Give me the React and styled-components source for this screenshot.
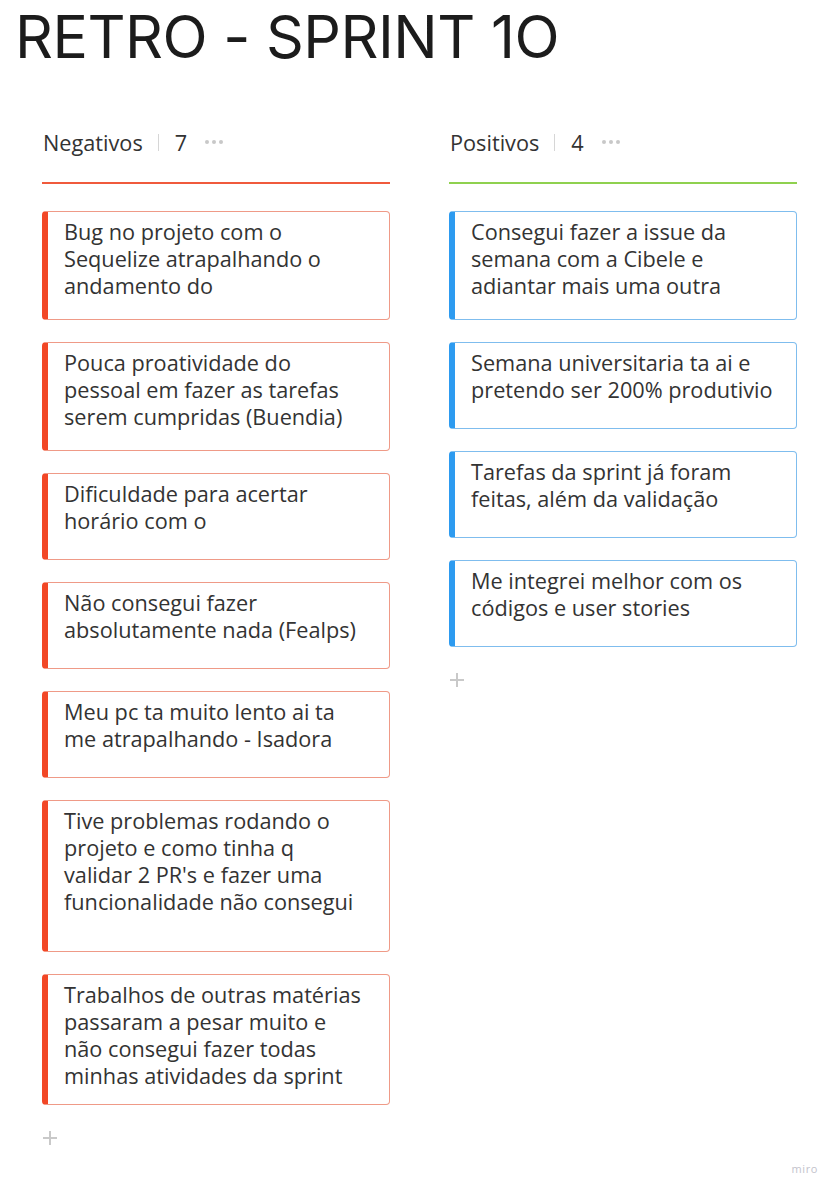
import React from "react";
import styled, { createGlobalStyle } from "styled-components";

const Global = createGlobalStyle`
  html, body { margin: 0; padding: 0; background: #ffffff; }
  body { width: 837px; height: 1193px; overflow: hidden; }
`;

const Page = styled.div`
  position: relative;
  width: 837px;
  height: 1193px;
  background: #fff;
  font-family: "Open Sans", "Noto Sans", sans-serif;
  color: #333;
`;

const Title = styled.h1`
  margin: 0;
  padding: 4px 0 0 15px;
  font-family: Inter, "Liberation Sans", sans-serif;
  font-weight: 400;
  font-size: 59px;
  line-height: 66px;
  letter-spacing: -0.5px;
  color: #1c1c1c;
`;

const Board = styled.div`
  display: grid;
  grid-template-columns: 348px 348px;
  column-gap: 59px;
  padding: 56px 0 0 42px;
`;

const Column = styled.div`
  display: flex;
  flex-direction: column;
`;

const Header = styled.div`
  display: flex;
  align-items: center;
  height: 32px;
  font-size: 21.7px;
  color: #333;
  padding-left: 1px;
`;

const Divider = styled.span`
  width: 1px;
  height: 17px;
  background: #d6d6d6;
  margin: 0 16px 0 15px;
`;

const Dots = styled.span`
  display: flex;
  gap: 3px;
  margin-left: 18px;
  span {
    width: 4px;
    height: 4px;
    border-radius: 50%;
    background: #c8c8c8;
  }
`;

const Rule = styled.div`
  height: 2px;
  background: ${(p) => p.$color};
  margin-top: 24px;
  margin-bottom: 27px;
`;

const Cards = styled.div`
  display: flex;
  flex-direction: column;
  gap: 22px;
`;

const Card = styled.div`
  box-sizing: border-box;
  height: ${(p) => p.$h}px;
  border: 1px solid ${(p) => p.$border};
  border-left: 6px solid ${(p) => p.$accent};
  border-radius: 4px;
  padding: 6px 10px 0 16px;
  font-size: 21.7px;
  line-height: 27px;
  color: #333;
  white-space: pre-line;
`;

const Add = styled.div`
  margin-top: 26px;
  margin-left: 1px;
  width: 14px;
  height: 14px;
  position: relative;
  &::before, &::after {
    content: "";
    position: absolute;
    background: #c9c9c9;
  }
  &::before { left: 6px; top: 0; width: 2px; height: 14px; }
  &::after { top: 6px; left: 0; width: 14px; height: 2px; }
`;

const Logo = styled.div`
  position: absolute;
  right: 19px;
  bottom: 17px;
  font-family: "Open Sans", sans-serif;
  font-size: 11px;
  letter-spacing: 0.6px;
  color: #c3c3cc;
`;

const RED = { accent: "#f24726", border: "#ef9a87" };
const BLUE = { accent: "#2d9bf0", border: "#7fbdee" };

const negatives = [
  { t: "Bug no projeto com o\nSequelize atrapalhando o\nandamento do", h: 109 },
  { t: "Pouca proatividade do\npessoal em fazer as tarefas\nserem cumpridas (Buendia)", h: 109 },
  { t: "Dificuldade para acertar\nhorário com o", h: 87 },
  { t: "Não consegui fazer\nabsolutamente nada (Fealps)", h: 87 },
  { t: "Meu pc ta muito lento ai ta\nme atrapalhando - Isadora", h: 87 },
  { t: "Tive problemas rodando o\nprojeto e como tinha q\nvalidar 2 PR's e fazer uma\nfuncionalidade não consegui", h: 152 },
  { t: "Trabalhos de outras matérias\npassaram a pesar muito e\nnão consegui fazer todas\nminhas atividades da sprint", h: 131 },
];

const positives = [
  { t: "Consegui fazer a issue da\nsemana com a Cibele e\nadiantar mais uma outra", h: 109 },
  { t: "Semana universitaria ta ai e\npretendo ser 200% produtivio", h: 87 },
  { t: "Tarefas da sprint já foram\nfeitas, além da validação", h: 87 },
  { t: "Me integrei melhor com os\ncódigos e user stories", h: 87 },
];

function Lane({ title, count, theme, ruleColor, items }) {
  return (
    <Column>
      <Header>
        {title}
        <Divider />
        {count}
        <Dots>
          <span />
          <span />
          <span />
        </Dots>
      </Header>
      <Rule $color={ruleColor} />
      <Cards>
        {items.map((it, i) => (
          <Card key={i} $h={it.h} $accent={theme.accent} $border={theme.border}>
            {it.t}
          </Card>
        ))}
      </Cards>
      <Add />
    </Column>
  );
}

export default function App() {
  return (
    <Page>
      <Global />
      <Title>RETRO - SPRINT 1O</Title>
      <Board>
        <Lane title="Negativos" count="7" theme={RED} ruleColor="#f05a3c" items={negatives} />
        <Lane title="Positivos" count="4" theme={BLUE} ruleColor="#8fd14f" items={positives} />
      </Board>
      <Logo>miro</Logo>
    </Page>
  );
}
